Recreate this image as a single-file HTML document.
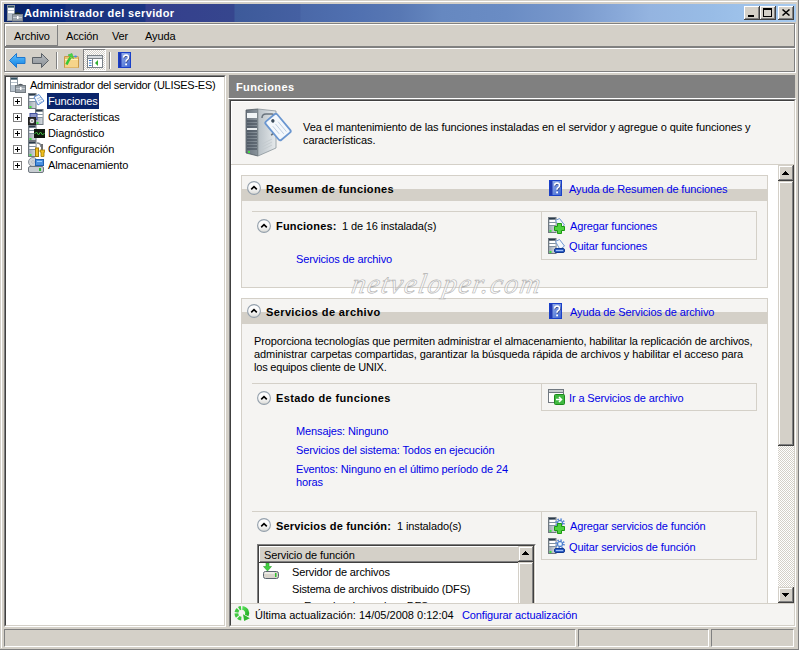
<!DOCTYPE html>
<html><head><meta charset="utf-8">
<style>
*{margin:0;padding:0;box-sizing:border-box}
html,body{width:799px;height:650px;overflow:hidden}
body{position:relative;background:#d4d0c8;font-family:"Liberation Sans",sans-serif;font-size:11px;color:#000}
.a{position:absolute}
.t{position:absolute;white-space:nowrap;line-height:13px;letter-spacing:-0.12px}
.b{font-weight:bold;letter-spacing:0.38px}
.lk{color:#0000e6}
.box{position:absolute;background:#f5f4f2;border:1px solid #d4d0c8}
.band{position:absolute;background:#d4d0c8}
.sep{position:absolute;height:1px;background:#d4d0c8}
.circ{position:absolute;width:14px;height:14px}
svg{position:absolute;display:block}
</style></head><body>
<!-- window frame -->
<div class="a" style="left:1px;top:1px;width:796px;height:1px;background:#fff"></div>
<div class="a" style="left:1px;top:1px;width:1px;height:647px;background:#fff"></div>
<div class="a" style="left:798px;top:0;width:1px;height:650px;background:#808080"></div>
<div class="a" style="left:0;top:649px;width:799px;height:1px;background:#808080"></div>

<!-- title bar -->
<div class="a" style="left:4px;top:4px;width:792px;height:18px;background:linear-gradient(to right,#0a246a 0px,#0a246a 26px,#0b2a7c 27px,#0b2a7c 61px,#18327e 62px,#1c3582 141px,#343e8c 142px,#36468e 230px,#3d5a9a 231px,#4560a2 296px,#4a68a8 297px,#5070b0 351px,#5878b4 396px,#6688c0 438px,#6a8cc4 501px,#7898cc 566px,#88a8d8 613px,#94b4e0 646px,#98bce6 706px,#a6caf0 792px)"></div>
<div class="t b" style="left:24px;top:7px;color:#fff">Administrador del servidor</div>


<!-- menu band -->
<div class="a" style="left:4px;top:23px;width:791px;height:1px;background:#808080"></div>
<div class="a" style="left:5px;top:24px;width:791px;height:1px;background:#fff"></div>
<div class="a" style="left:4px;top:23px;width:1px;height:49px;background:#808080"></div>
<div class="a" style="left:5px;top:24px;width:1px;height:49px;background:#fff"></div>
<div class="a" style="left:794px;top:23px;width:1px;height:49px;background:#808080"></div>
<div class="a" style="left:795px;top:24px;width:1px;height:49px;background:#fff"></div>
<div class="a" style="left:5px;top:46px;width:790px;height:2px;background:#808080"></div>
<div class="a" style="left:5px;top:48px;width:790px;height:1px;background:#fff"></div>
<div class="a" style="left:5px;top:71px;width:790px;height:1px;background:#808080"></div>
<div class="a" style="left:5px;top:72px;width:791px;height:1px;background:#fff"></div>
<!-- Archivo pressed -->
<div class="a" style="left:6px;top:25px;width:51px;height:1px;background:#fff"></div>
<div class="a" style="left:6px;top:45px;width:52px;height:1px;background:#808080"></div>
<div class="a" style="left:57px;top:25px;width:1px;height:21px;background:#808080"></div>
<div class="t" style="left:14px;top:30px">Archivo</div>
<div class="t" style="left:66px;top:30px">Acción</div>
<div class="t" style="left:112px;top:30px">Ver</div>
<div class="t" style="left:145px;top:30px">Ayuda</div>

<!-- tree pane -->
<div class="a" style="left:4px;top:75px;width:222px;height:552px;background:#fff;border-top:1px solid #808080;border-left:1px solid #808080;border-right:1px solid #fff;border-bottom:1px solid #fff"></div>
<div class="a" style="left:5px;top:76px;width:220px;height:550px;border-top:1px solid #404040;border-left:1px solid #404040;border-right:1px solid #d4d0c8;border-bottom:1px solid #d4d0c8"></div>
<div class="t" style="left:30px;top:79px;letter-spacing:-0.27px">Administrador del servidor (ULISES-ES)</div>
<div class="a" style="left:47px;top:93px;width:52px;height:16px;background:#0a246a"></div>
<div class="t" style="left:48px;top:95px;color:#fff">Funciones</div>
<div class="t" style="left:48px;top:111px">Características</div>
<div class="t" style="left:48px;top:127px">Diagnóstico</div>
<div class="t" style="left:48px;top:143px">Configuración</div>
<div class="t" style="left:48px;top:159px">Almacenamiento</div>

<!-- right pane header -->
<div class="a" style="left:229px;top:75px;width:566px;height:23px;background:#808080"></div>
<div class="a" style="left:228px;top:98px;width:568px;height:1px;background:#fff"></div>
<div class="t b" style="left:236px;top:81px;color:#fff">Funciones</div>

<!-- content pane -->
<div class="a" style="left:229px;top:99px;width:567px;height:528px;background:#fff;border-top:1px solid #808080;border-left:1px solid #808080;border-right:1px solid #fff;border-bottom:1px solid #fff"></div>
<div class="a" style="left:230px;top:100px;width:565px;height:526px;border-top:1px solid #404040;border-left:1px solid #404040;border-right:1px solid #d4d0c8;border-bottom:1px solid #d4d0c8"></div>
<!-- intro -->
<div class="a" style="left:231px;top:101px;width:563px;height:63px;background:#f5f4f2;border-top:1px solid #fff;border-left:1px solid #fff"></div>
<div class="a" style="left:231px;top:164px;width:563px;height:1px;background:#d4d0c8"></div>
<div class="t" style="left:303px;top:121px;letter-spacing:-0.1px">Vea el mantenimiento de las funciones instaladas en el servidor y agregue o quite funciones y<br>características.</div>

<!-- scroll content -->
<div class="a" style="left:231px;top:165px;width:547px;height:438px;overflow:hidden;background:#fff">
<div class="a" style="left:-231px;top:-165px;width:799px;height:650px">
<!-- box1 -->
<div class="box" style="left:241px;top:175px;width:527px;height:113px"></div>
<div class="band" style="left:242px;top:189px;width:525px;height:12px"></div>
<div class="t b" style="left:266px;top:183px">Resumen de funciones</div>
<div class="t lk" style="left:569px;top:183px">Ayuda de Resumen de funciones</div>
<div class="sep" style="left:252px;top:211px;width:289px"></div>
<div class="box" style="left:541px;top:211px;width:216px;height:49px"></div>
<div class="t b" style="left:276px;top:220px;letter-spacing:0.2px">Funciones:</div>
<div class="t" style="left:342px;top:220px">1 de 16 instalada(s)</div>
<div class="t lk" style="left:570px;top:220px">Agregar funciones</div>
<div class="t lk" style="left:569px;top:240px">Quitar funciones</div>
<div class="t lk" style="left:296px;top:253px">Servicios de archivo</div>
<!-- box2 -->
<div class="box" style="left:241px;top:298px;width:527px;height:400px"></div>
<div class="band" style="left:242px;top:312px;width:525px;height:12px"></div>
<div class="t b" style="left:266px;top:306px">Servicios de archivo</div>
<div class="t lk" style="left:570px;top:306px">Ayuda de Servicios de archivo</div>
<div class="t" style="left:254px;top:335px;letter-spacing:-0.14px">Proporciona tecnologías que permiten administrar el almacenamiento, habilitar la replicación de archivos,</div>
<div class="t" style="left:254px;top:348px;letter-spacing:-0.09px">administrar carpetas compartidas, garantizar la búsqueda rápida de archivos y habilitar el acceso para</div>
<div class="t" style="left:254px;top:361px;letter-spacing:-0.2px">los equipos cliente de UNIX.</div>
<div class="sep" style="left:252px;top:383px;width:289px"></div>
<div class="box" style="left:541px;top:383px;width:216px;height:28px"></div>
<div class="t b" style="left:276px;top:392px">Estado de funciones</div>
<div class="t lk" style="left:569px;top:392px">Ir a Servicios de archivo</div>
<div class="t lk" style="left:296px;top:425px">Mensajes: Ninguno</div>
<div class="t lk" style="left:296px;top:444px">Servicios del sistema: Todos en ejecución</div>
<div class="t lk" style="left:296px;top:463px">Eventos: Ninguno en el último período de 24<br>horas</div>
<div class="sep" style="left:252px;top:511px;width:289px"></div>
<div class="box" style="left:541px;top:511px;width:216px;height:49px"></div>
<div class="t b" style="left:276px;top:520px;letter-spacing:0.18px">Servicios de función:</div>
<div class="t" style="left:397px;top:520px">1 instalado(s)</div>
<div class="t lk" style="left:570px;top:520px">Agregar servicios de función</div>
<div class="t lk" style="left:569px;top:541px">Quitar servicios de función</div>
<svg style="left:247px;top:181px" width="14" height="14" viewBox="0 0 14 14">
<defs><linearGradient id="cg247181" x1="0" y1="0" x2="0" y2="1"><stop offset="0" stop-color="#ffffff"/><stop offset="0.55" stop-color="#f8f8f8"/><stop offset="1" stop-color="#d8d8d4"/></linearGradient></defs>
<circle cx="7" cy="7" r="6.4" fill="url(#cg247181)" stroke="#94a0ac" stroke-width="1.1"/>
<path d="M4.2 8.4 L7 5.6 L9.8 8.4" fill="none" stroke="#000" stroke-width="1.6"/></svg>
<svg style="left:247px;top:304px" width="14" height="14" viewBox="0 0 14 14">
<defs><linearGradient id="cg247304" x1="0" y1="0" x2="0" y2="1"><stop offset="0" stop-color="#ffffff"/><stop offset="0.55" stop-color="#f8f8f8"/><stop offset="1" stop-color="#d8d8d4"/></linearGradient></defs>
<circle cx="7" cy="7" r="6.4" fill="url(#cg247304)" stroke="#94a0ac" stroke-width="1.1"/>
<path d="M4.2 8.4 L7 5.6 L9.8 8.4" fill="none" stroke="#000" stroke-width="1.6"/></svg>
<svg style="left:257px;top:219px" width="14" height="14" viewBox="0 0 14 14">
<defs><linearGradient id="cg257219" x1="0" y1="0" x2="0" y2="1"><stop offset="0" stop-color="#ffffff"/><stop offset="0.55" stop-color="#f8f8f8"/><stop offset="1" stop-color="#d8d8d4"/></linearGradient></defs>
<circle cx="7" cy="7" r="6.4" fill="url(#cg257219)" stroke="#94a0ac" stroke-width="1.1"/>
<path d="M4.2 8.4 L7 5.6 L9.8 8.4" fill="none" stroke="#000" stroke-width="1.6"/></svg>
<svg style="left:257px;top:391px" width="14" height="14" viewBox="0 0 14 14">
<defs><linearGradient id="cg257391" x1="0" y1="0" x2="0" y2="1"><stop offset="0" stop-color="#ffffff"/><stop offset="0.55" stop-color="#f8f8f8"/><stop offset="1" stop-color="#d8d8d4"/></linearGradient></defs>
<circle cx="7" cy="7" r="6.4" fill="url(#cg257391)" stroke="#94a0ac" stroke-width="1.1"/>
<path d="M4.2 8.4 L7 5.6 L9.8 8.4" fill="none" stroke="#000" stroke-width="1.6"/></svg>
<svg style="left:257px;top:518px" width="14" height="14" viewBox="0 0 14 14">
<defs><linearGradient id="cg257518" x1="0" y1="0" x2="0" y2="1"><stop offset="0" stop-color="#ffffff"/><stop offset="0.55" stop-color="#f8f8f8"/><stop offset="1" stop-color="#d8d8d4"/></linearGradient></defs>
<circle cx="7" cy="7" r="6.4" fill="url(#cg257518)" stroke="#94a0ac" stroke-width="1.1"/>
<path d="M4.2 8.4 L7 5.6 L9.8 8.4" fill="none" stroke="#000" stroke-width="1.6"/></svg>
<svg style="left:549px;top:180px" width="13" height="16" viewBox="0 0 13 16">
<defs><linearGradient id="hg549180" x1="0" y1="0" x2="1" y2="1"><stop offset="0" stop-color="#a0b8ec"/><stop offset="0.5" stop-color="#7090e0"/><stop offset="1" stop-color="#3860d0"/></linearGradient></defs>
<rect x="0.5" y="0.5" width="12" height="15" fill="url(#hg549180)" stroke="#1a40c8"/>
<rect x="1" y="1" width="2.5" height="14" fill="#2038b0"/>
<path d="M5.6 5.6 q0.2-2.6 2.6-2.6 q2.3 0.1 2.3 2.4 q0 1.4-1.6 2.4 q-0.9 0.6-0.9 2" fill="none" stroke="#2a3060" stroke-width="1.2" transform="translate(0.6 0.6)"/>
<path d="M5.6 5.6 q0.2-2.6 2.6-2.6 q2.3 0.1 2.3 2.4 q0 1.4-1.6 2.4 q-0.9 0.6-0.9 2" fill="none" stroke="#fff" stroke-width="1.5"/>
<rect x="7.2" y="11.5" width="1.8" height="1.8" fill="#fff"/></svg>
<svg style="left:549px;top:303px" width="13" height="16" viewBox="0 0 13 16">
<defs><linearGradient id="hg549303" x1="0" y1="0" x2="1" y2="1"><stop offset="0" stop-color="#a0b8ec"/><stop offset="0.5" stop-color="#7090e0"/><stop offset="1" stop-color="#3860d0"/></linearGradient></defs>
<rect x="0.5" y="0.5" width="12" height="15" fill="url(#hg549303)" stroke="#1a40c8"/>
<rect x="1" y="1" width="2.5" height="14" fill="#2038b0"/>
<path d="M5.6 5.6 q0.2-2.6 2.6-2.6 q2.3 0.1 2.3 2.4 q0 1.4-1.6 2.4 q-0.9 0.6-0.9 2" fill="none" stroke="#2a3060" stroke-width="1.2" transform="translate(0.6 0.6)"/>
<path d="M5.6 5.6 q0.2-2.6 2.6-2.6 q2.3 0.1 2.3 2.4 q0 1.4-1.6 2.4 q-0.9 0.6-0.9 2" fill="none" stroke="#fff" stroke-width="1.5"/>
<rect x="7.2" y="11.5" width="1.8" height="1.8" fill="#fff"/></svg>
<svg style="left:548px;top:217px" width="9" height="16" viewBox="0 0 9 16">
<defs><linearGradient id="sv548217" x1="0" x2="1"><stop offset="0" stop-color="#9aa4ae"/><stop offset="1" stop-color="#d8dde2"/></linearGradient></defs>
<rect x="0.5" y="0.5" width="7.5" height="15" fill="url(#sv548217)" stroke="#707880"/>
<rect x="1" y="1" width="6.5" height="1.5" fill="#2a3a4a"/>
<rect x="1.5" y="3" width="6" height="2" fill="#fff"/>
<rect x="1.5" y="6" width="6" height="2" fill="#fff"/>
<rect x="1" y="5" width="6.5" height="1" fill="#8090a0"/>
<rect x="1" y="8" width="6.5" height="1" fill="#8090a0"/>
<rect x="1.5" y="13" width="2" height="2" fill="#40e040"/>
</svg>
<svg style="left:555px;top:218px" width="10" height="12" viewBox="0 0 10 12">
<path d="M0.5 2.5 L4.5 0.5 L9.5 7 L5 10.5 Z" fill="#f4f8fc" stroke="#7098d0"/></svg>
<svg style="left:554px;top:223px" width="11" height="11" viewBox="0 0 11 11">
<path d="M3.5 0.5h4v3h3v4h-3v3h-4v-3h-3v-4h3z" fill="#50d040" stroke="#1a9a10"/></svg>
<svg style="left:548px;top:238px" width="9" height="16" viewBox="0 0 9 16">
<defs><linearGradient id="sv548238" x1="0" x2="1"><stop offset="0" stop-color="#9aa4ae"/><stop offset="1" stop-color="#d8dde2"/></linearGradient></defs>
<rect x="0.5" y="0.5" width="7.5" height="15" fill="url(#sv548238)" stroke="#707880"/>
<rect x="1" y="1" width="6.5" height="1.5" fill="#2a3a4a"/>
<rect x="1.5" y="3" width="6" height="2" fill="#fff"/>
<rect x="1.5" y="6" width="6" height="2" fill="#fff"/>
<rect x="1" y="5" width="6.5" height="1" fill="#8090a0"/>
<rect x="1" y="8" width="6.5" height="1" fill="#8090a0"/>
<rect x="1.5" y="13" width="2" height="2" fill="#40e040"/>
</svg>
<svg style="left:555px;top:239px" width="10" height="12" viewBox="0 0 10 12">
<path d="M0.5 2.5 L4.5 0.5 L9.5 7 L5 10.5 Z" fill="#f4f8fc" stroke="#7098d0"/></svg>
<svg style="left:554px;top:248px" width="11" height="5" viewBox="0 0 11 5">
<rect x="0.5" y="0.5" width="10" height="4" rx="1.5" fill="#3060c8" stroke="#103890"/><rect x="2" y="2" width="7" height="1" fill="#a0c0f0"/></svg>
<svg style="left:548px;top:517px" width="9" height="16" viewBox="0 0 9 16">
<defs><linearGradient id="sv548517" x1="0" x2="1"><stop offset="0" stop-color="#9aa4ae"/><stop offset="1" stop-color="#d8dde2"/></linearGradient></defs>
<rect x="0.5" y="0.5" width="7.5" height="15" fill="url(#sv548517)" stroke="#707880"/>
<rect x="1" y="1" width="6.5" height="1.5" fill="#2a3a4a"/>
<rect x="1.5" y="3" width="6" height="2" fill="#fff"/>
<rect x="1.5" y="6" width="6" height="2" fill="#fff"/>
<rect x="1" y="5" width="6.5" height="1" fill="#8090a0"/>
<rect x="1" y="8" width="6.5" height="1" fill="#8090a0"/>
<rect x="1.5" y="13" width="2" height="2" fill="#40e040"/>
</svg>
<svg style="left:555px;top:518px" width="10" height="10" viewBox="0 0 10 10">
<circle cx="5" cy="5" r="3.9" fill="none" stroke="#5a8ad8" stroke-width="1.8" stroke-dasharray="1.5 1.55"/><circle cx="5" cy="5" r="2.7" fill="#b8d4f4" stroke="#4a7ac8" stroke-width="1"/><circle cx="5" cy="5" r="1.1" fill="#fff"/></svg>
<svg style="left:554px;top:523px" width="11" height="11" viewBox="0 0 11 11">
<path d="M3.5 0.5h4v3h3v4h-3v3h-4v-3h-3v-4h3z" fill="#50d040" stroke="#1a9a10"/></svg>
<svg style="left:548px;top:538px" width="9" height="16" viewBox="0 0 9 16">
<defs><linearGradient id="sv548538" x1="0" x2="1"><stop offset="0" stop-color="#9aa4ae"/><stop offset="1" stop-color="#d8dde2"/></linearGradient></defs>
<rect x="0.5" y="0.5" width="7.5" height="15" fill="url(#sv548538)" stroke="#707880"/>
<rect x="1" y="1" width="6.5" height="1.5" fill="#2a3a4a"/>
<rect x="1.5" y="3" width="6" height="2" fill="#fff"/>
<rect x="1.5" y="6" width="6" height="2" fill="#fff"/>
<rect x="1" y="5" width="6.5" height="1" fill="#8090a0"/>
<rect x="1" y="8" width="6.5" height="1" fill="#8090a0"/>
<rect x="1.5" y="13" width="2" height="2" fill="#40e040"/>
</svg>
<svg style="left:555px;top:539px" width="10" height="10" viewBox="0 0 10 10">
<circle cx="5" cy="5" r="3.9" fill="none" stroke="#5a8ad8" stroke-width="1.8" stroke-dasharray="1.5 1.55"/><circle cx="5" cy="5" r="2.7" fill="#b8d4f4" stroke="#4a7ac8" stroke-width="1"/><circle cx="5" cy="5" r="1.1" fill="#fff"/></svg>
<svg style="left:554px;top:548px" width="11" height="5" viewBox="0 0 11 5">
<rect x="0.5" y="0.5" width="10" height="4" rx="1.5" fill="#3060c8" stroke="#103890"/><rect x="2" y="2" width="7" height="1" fill="#a0c0f0"/></svg>
<svg style="left:548px;top:389px" width="17" height="16" viewBox="0 0 17 16">
<rect x="0.5" y="0.5" width="15" height="13" fill="#fff" stroke="#707880"/><rect x="1" y="1" width="14" height="2" fill="#c8ccd0"/><path d="M1 3.5h14" stroke="#707880"/>
<rect x="6.5" y="5.5" width="10" height="10" rx="1" fill="#40b840" stroke="#1a8a1a"/>
<path d="M8 10.5h5M11 8l2.5 2.5L11 13" fill="none" stroke="#fff" stroke-width="1.5"/></svg>

<!-- listview -->
<div class="a" style="left:257px;top:544px;width:279px;height:100px;background:#fff;border-top:1px solid #808080;border-left:1px solid #808080;border-right:1px solid #fff;border-bottom:1px solid #fff"></div>
<div class="a" style="left:258px;top:545px;width:277px;height:98px;border-top:1px solid #404040;border-left:1px solid #404040;border-right:1px solid #d4d0c8;border-bottom:1px solid #d4d0c8"></div>
<div class="a" style="left:259px;top:546px;width:260px;height:16px;background:#d4d0c8;border-top:1px solid #fff;border-left:1px solid #fff;box-shadow:inset 0 -1px #808080, 0 1px #404040"></div>
<div class="t" style="left:264px;top:549px">Servicio de función</div>
<svg style="left:263px;top:563px" width="16" height="16" viewBox="0 0 16 16">
<path d="M3 0h3v3.5h2.5L4.5 8 0.5 3.5H3z" fill="#40d040" stroke="#30a030" stroke-width="0.6"/>
<rect x="0.5" y="8.5" width="15" height="7" rx="2" fill="#d8d4cc" stroke="#5a6470"/><rect x="1.5" y="9.5" width="10" height="1" fill="#fff"/><rect x="12" y="10" width="1.5" height="4" fill="#30c030"/></svg>
<div class="t" style="left:292px;top:566px">Servidor de archivos</div>
<div class="t" style="left:292px;top:583px;letter-spacing:-0.17px">Sistema de archivos distribuido (DFS)</div>
<div class="t" style="left:304px;top:600px;letter-spacing:-0.3px">Espacios de nombres DFS</div>
<div class="a" style="left:518px;top:546px;width:16px;height:16px;background:#d4d0c8;box-shadow:inset -1px -1px #404040,inset 1px 1px #d4d0c8,inset -2px -2px #808080,inset 2px 2px #fff"></div>
<svg style="left:522px;top:551px" width="7" height="4" viewBox="0 0 7 4"><path d="M3 0h1v1h1v1h1v1h1v1h-7v-1h1v-1h1v-1h1z" fill="#000"/></svg>
<div class="a" style="left:518px;top:562px;width:16px;height:60px;background:#d4d0c8;box-shadow:inset -1px -1px #404040,inset 1px 1px #d4d0c8,inset -2px -2px #808080,inset 2px 2px #fff"></div>
</div>
</div>
<!-- footer -->
<div class="a" style="left:231px;top:603px;width:563px;height:1px;background:#d4d0c8"></div>
<div class="a" style="left:231px;top:604px;width:563px;height:21px;background:#f5f4f2"></div>
<div class="t" style="left:255px;top:609px;letter-spacing:0">Última actualización: 14/05/2008 0:12:04</div>
<div class="t lk" style="left:462px;top:609px">Configurar actualización</div>

<!-- status bar -->
<div class="a" style="left:4px;top:629px;width:572px;height:18px;border-top:1px solid #808080;border-left:1px solid #808080;border-right:1px solid #fff;border-bottom:1px solid #fff"></div>
<div class="a" style="left:578px;top:629px;width:131px;height:18px;border-top:1px solid #808080;border-left:1px solid #808080;border-right:1px solid #fff;border-bottom:1px solid #fff"></div>
<div class="a" style="left:711px;top:629px;width:83px;height:18px;border-top:1px solid #808080;border-left:1px solid #808080;border-right:1px solid #fff;border-bottom:1px solid #fff"></div>
<!-- icons1 -->
<svg style="left:7px;top:5px" width="16" height="17" viewBox="0 0 16 17">
<rect x="0.5" y="0.5" width="7" height="15" fill="#b8c2cc" stroke="#8a949e"/>
<rect x="1" y="1" width="6" height="1.5" fill="#305060"/>
<rect x="1" y="3" width="6" height="2" fill="#fff"/><rect x="1" y="6" width="6" height="2" fill="#fff"/>
<path d="M7.5 9.5 q3-3 6 0" fill="none" stroke="#1a2a20" stroke-width="1.2"/>
<rect x="5.5" y="9.5" width="10" height="6.5" fill="#9aa2aa" stroke="#7a828a"/>
<rect x="6" y="12" width="9" height="1" fill="#c8ced4"/><rect x="10" y="11" width="1.5" height="3" fill="#fff"/>
</svg>
<svg style="left:10px;top:77px" width="16" height="16" viewBox="0 0 16 16">
<rect x="0.5" y="0.5" width="7" height="14" fill="#b8c2cc" stroke="#8a949e"/>
<rect x="1" y="1" width="6" height="1.5" fill="#305060"/>
<rect x="1" y="3" width="6" height="2" fill="#fff"/><rect x="1" y="6" width="6" height="2" fill="#fff"/>
<path d="M7.5 9 q3-3 6 0" fill="none" stroke="#505860" stroke-width="1.2"/>
<rect x="5.5" y="8.5" width="10" height="7" fill="#9aa2aa" stroke="#70787e"/>
<rect x="6" y="11" width="9" height="1" fill="#c8ced4"/><rect x="10" y="10" width="1.5" height="3" fill="#fff"/>
</svg>
<svg style="left:13px;top:97px" width="9" height="9" viewBox="0 0 9 9">
<rect x="0.5" y="0.5" width="8" height="8" fill="#fff" stroke="#808080"/><path d="M2 4.5h5M4.5 2v5" stroke="#000" stroke-width="1"/></svg>
<svg style="left:13px;top:113px" width="9" height="9" viewBox="0 0 9 9">
<rect x="0.5" y="0.5" width="8" height="8" fill="#fff" stroke="#808080"/><path d="M2 4.5h5M4.5 2v5" stroke="#000" stroke-width="1"/></svg>
<svg style="left:13px;top:129px" width="9" height="9" viewBox="0 0 9 9">
<rect x="0.5" y="0.5" width="8" height="8" fill="#fff" stroke="#808080"/><path d="M2 4.5h5M4.5 2v5" stroke="#000" stroke-width="1"/></svg>
<svg style="left:13px;top:145px" width="9" height="9" viewBox="0 0 9 9">
<rect x="0.5" y="0.5" width="8" height="8" fill="#fff" stroke="#808080"/><path d="M2 4.5h5M4.5 2v5" stroke="#000" stroke-width="1"/></svg>
<svg style="left:13px;top:161px" width="9" height="9" viewBox="0 0 9 9">
<rect x="0.5" y="0.5" width="8" height="8" fill="#fff" stroke="#808080"/><path d="M2 4.5h5M4.5 2v5" stroke="#000" stroke-width="1"/></svg>
<svg style="left:28px;top:93px" width="9" height="16" viewBox="0 0 9 16">
<defs><linearGradient id="sg" x1="0" x2="1"><stop offset="0" stop-color="#9aa4ae"/><stop offset="1" stop-color="#d8dde2"/></linearGradient></defs>
<rect x="0.5" y="0.5" width="7.5" height="15" fill="url(#sg)" stroke="#707880"/>
<rect x="1" y="1" width="6.5" height="1.5" fill="#2a3a4a"/>
<rect x="1.5" y="3" width="6" height="2" fill="#fff"/>
<rect x="1.5" y="6" width="6" height="2" fill="#fff"/>
<rect x="1" y="5" width="6.5" height="1" fill="#8090a0"/>
<rect x="1" y="8" width="6.5" height="1" fill="#8090a0"/>
<rect x="1.5" y="13" width="2" height="2" fill="#40e040"/>
</svg>
<svg style="left:33px;top:94px" width="12" height="13" viewBox="0 0 12 13">
<path d="M1 3 L6 0.5 L11 7 L5 11 Z" fill="#f4f8fc" stroke="#5a8ad0"/>
<path d="M4 5l4-2M5 7l4-2M6 9l3-1.5" stroke="#90b0d8" stroke-width="0.8"/></svg>
<svg style="left:35px;top:109px" width="9" height="16" viewBox="0 0 9 16">
<defs><linearGradient id="sg" x1="0" x2="1"><stop offset="0" stop-color="#9aa4ae"/><stop offset="1" stop-color="#d8dde2"/></linearGradient></defs>
<rect x="0.5" y="0.5" width="7.5" height="15" fill="url(#sg)" stroke="#707880"/>
<rect x="1" y="1" width="6.5" height="1.5" fill="#2a3a4a"/>
<rect x="1.5" y="3" width="6" height="2" fill="#fff"/>
<rect x="1.5" y="6" width="6" height="2" fill="#fff"/>
<rect x="1" y="5" width="6.5" height="1" fill="#8090a0"/>
<rect x="1" y="8" width="6.5" height="1" fill="#8090a0"/>
<rect x="1.5" y="13" width="2" height="2" fill="#40e040"/>
</svg>
<svg style="left:28px;top:113px" width="10" height="12" viewBox="0 0 10 12">
<rect x="2" y="0.5" width="7" height="6" fill="#8a94c8" stroke="#4050a0"/>
<rect x="0.5" y="4.5" width="7" height="7" fill="#303030" stroke="#202020"/><circle cx="4" cy="8" r="2.3" fill="#e8e8e8"/><circle cx="4" cy="8" r="0.7" fill="#303030"/></svg>
<svg style="left:28px;top:125px" width="9" height="16" viewBox="0 0 9 16">
<defs><linearGradient id="sg" x1="0" x2="1"><stop offset="0" stop-color="#9aa4ae"/><stop offset="1" stop-color="#d8dde2"/></linearGradient></defs>
<rect x="0.5" y="0.5" width="7.5" height="15" fill="url(#sg)" stroke="#707880"/>
<rect x="1" y="1" width="6.5" height="1.5" fill="#2a3a4a"/>
<rect x="1.5" y="3" width="6" height="2" fill="#fff"/>
<rect x="1.5" y="6" width="6" height="2" fill="#fff"/>
<rect x="1" y="5" width="6.5" height="1" fill="#8090a0"/>
<rect x="1" y="8" width="6.5" height="1" fill="#8090a0"/>
<rect x="1.5" y="13" width="2" height="2" fill="#40e040"/>
</svg>
<svg style="left:34px;top:129px" width="11" height="9" viewBox="0 0 11 9">
<rect x="0" y="0" width="11" height="9" fill="#101810"/><path d="M0.5 5 l2-2 l2 3 l2-3 l2 3 l2-2" fill="none" stroke="#40c040" stroke-width="1"/></svg>
<svg style="left:28px;top:141px" width="9" height="16" viewBox="0 0 9 16">
<defs><linearGradient id="sg" x1="0" x2="1"><stop offset="0" stop-color="#9aa4ae"/><stop offset="1" stop-color="#d8dde2"/></linearGradient></defs>
<rect x="0.5" y="0.5" width="7.5" height="15" fill="url(#sg)" stroke="#707880"/>
<rect x="1" y="1" width="6.5" height="1.5" fill="#2a3a4a"/>
<rect x="1.5" y="3" width="6" height="2" fill="#fff"/>
<rect x="1.5" y="6" width="6" height="2" fill="#fff"/>
<rect x="1" y="5" width="6.5" height="1" fill="#8090a0"/>
<rect x="1" y="8" width="6.5" height="1" fill="#8090a0"/>
<rect x="1.5" y="13" width="2" height="2" fill="#40e040"/>
</svg>
<svg style="left:35px;top:142px" width="10" height="15" viewBox="0 0 10 15">
<path d="M2 1 q4 0 4 4" fill="none" stroke="#808890" stroke-width="1.5"/>
<rect x="0.5" y="6" width="3" height="8.5" fill="#f0c020" stroke="#a07808"/><rect x="6" y="2" width="2" height="6" fill="#707070"/>
<path d="M5 8h5v2h-1v4.5h-3v-4.5h-1z" fill="#f0c020" stroke="#a07808" stroke-width="0.8"/></svg>
<svg style="left:28px;top:157px" width="16" height="16" viewBox="0 0 16 16">
<circle cx="5" cy="5" r="4.5" fill="#d0d4d8" stroke="#8a9098"/><circle cx="5" cy="5" r="1.2" fill="#fff" stroke="#8a9098" stroke-width="0.6"/>
<rect x="7.5" y="2.5" width="8" height="6" fill="#4a90e0" stroke="#2060b0"/><rect x="9" y="4" width="5" height="1" fill="#a0d0ff"/>
<rect x="0.5" y="9.5" width="15" height="6" rx="1.5" fill="#c8cdd2" stroke="#707880"/><rect x="11" y="11" width="2" height="3" fill="#30c030"/></svg>
<svg style="left:9px;top:53px" width="17" height="15" viewBox="0 0 17 15">
<defs><linearGradient id="bk" x1="0" y1="0" x2="0" y2="1"><stop offset="0" stop-color="#60c0ff"/><stop offset="1" stop-color="#1080e0"/></linearGradient></defs>
<path d="M0.5 7.5 L7.5 0.5 V4.5 H16 V10.5 H7.5 V14.5 Z" fill="url(#bk)" stroke="#1e78d0"/></svg>
<svg style="left:32px;top:53px" width="17" height="15" viewBox="0 0 17 15">
<defs><linearGradient id="fw" x1="0" y1="0" x2="0" y2="1"><stop offset="0" stop-color="#b8bcc0"/><stop offset="1" stop-color="#8a9096"/></linearGradient></defs>
<path d="M16.5 7.5 L9.5 0.5 V4.5 H0.5 V10.5 H9.5 V14.5 Z" fill="url(#fw)" stroke="#5a6066"/></svg>
<div class="a" style="left:56px;top:52px;width:1px;height:17px;background:#808080"></div><div class="a" style="left:57px;top:52px;width:1px;height:17px;background:#fff"></div>
<div class="a" style="left:109px;top:52px;width:1px;height:17px;background:#808080"></div><div class="a" style="left:110px;top:52px;width:1px;height:17px;background:#fff"></div>
<svg style="left:63px;top:53px" width="17" height="16" viewBox="0 0 17 16">
<path d="M1.5 3.5 h13 a1 1 0 0 1 1 1 v10 h-14 z" fill="#ecc272" stroke="#c89848"/>
<rect x="2" y="6" width="13" height="8.5" fill="#f6d48a"/>
<rect x="2" y="6" width="13" height="1" fill="#fff0b8"/>
<ellipse cx="12.5" cy="3.5" rx="1.4" ry="0.9" fill="#3a8ee8"/>
<path d="M3.5 11.5 C4.5 9 6 6.5 7.5 4.5" fill="none" stroke="#38c838" stroke-width="2.6"/>
<path d="M5 2 L9 0.5 L10.5 5.5 Z" fill="#48d848" stroke="#38b838" stroke-width="0.6"/>
</svg>
<div class="a" style="left:83px;top:49px;width:23px;height:22px;border-top:1px solid #808080;border-left:1px solid #808080;border-right:1px solid #fff;border-bottom:1px solid #fff;background-color:#fff;background-image:linear-gradient(45deg,#d4d0c8 25%,transparent 25%,transparent 75%,#d4d0c8 75%),linear-gradient(45deg,#d4d0c8 25%,transparent 25%,transparent 75%,#d4d0c8 75%);background-size:2px 2px;background-position:0 0,1px 1px"></div>
<svg style="left:87px;top:55px" width="16" height="13" viewBox="0 0 16 13">
<rect x="0.5" y="0.5" width="15" height="12" fill="#fff" stroke="#7a8288"/><rect x="1" y="1" width="14" height="2" fill="#d8dce0"/>
<path d="M1 3.5h14" stroke="#7a8288"/><path d="M5.5 3.5v9" stroke="#7a8288"/>
<rect x="2" y="5" width="2.5" height="1" fill="#3a80d0"/><rect x="2" y="7.5" width="2.5" height="1" fill="#3a80d0"/><rect x="2" y="10" width="2.5" height="1" fill="#3a80d0"/>
<path d="M11 5 L8 8 L11 11 Z" fill="#30b030"/></svg>
<svg style="left:118px;top:52px" width="13" height="16" viewBox="0 0 13 16">
<defs><linearGradient id="hg11852" x1="0" y1="0" x2="1" y2="1"><stop offset="0" stop-color="#a0b8ec"/><stop offset="0.5" stop-color="#7090e0"/><stop offset="1" stop-color="#3860d0"/></linearGradient></defs>
<rect x="0.5" y="0.5" width="12" height="15" fill="url(#hg11852)" stroke="#1a40c8"/>
<rect x="1" y="1" width="2.5" height="14" fill="#2038b0"/>
<path d="M5.6 5.6 q0.2-2.6 2.6-2.6 q2.3 0.1 2.3 2.4 q0 1.4-1.6 2.4 q-0.9 0.6-0.9 2" fill="none" stroke="#2a3060" stroke-width="1.2" transform="translate(0.6 0.6)"/>
<path d="M5.6 5.6 q0.2-2.6 2.6-2.6 q2.3 0.1 2.3 2.4 q0 1.4-1.6 2.4 q-0.9 0.6-0.9 2" fill="none" stroke="#fff" stroke-width="1.5"/>
<rect x="7.2" y="11.5" width="1.8" height="1.8" fill="#fff"/></svg>

<!-- main scrollbar -->
<div class="a" style="left:778px;top:165px;width:16px;height:438px;background-color:#fff;background-image:linear-gradient(45deg,#d4d0c8 25%,transparent 25%,transparent 75%,#d4d0c8 75%),linear-gradient(45deg,#d4d0c8 25%,transparent 25%,transparent 75%,#d4d0c8 75%);background-size:2px 2px;background-position:0 0,1px 1px"></div>
<div class="a" style="left:778px;top:165px;width:16px;height:16px;background:#d4d0c8;box-shadow:inset -1px -1px #404040,inset 1px 1px #d4d0c8,inset -2px -2px #808080,inset 2px 2px #fff"></div>
<svg style="left:782px;top:171px" width="7" height="4" viewBox="0 0 7 4"><path d="M3 0h1v1h1v1h1v1h1v1h-7v-1h1v-1h1v-1h1z" fill="#000"/></svg>
<div class="a" style="left:778px;top:181px;width:16px;height:265px;background:#d4d0c8;box-shadow:inset -1px -1px #404040,inset 1px 1px #d4d0c8,inset -2px -2px #808080,inset 2px 2px #fff"></div>
<div class="a" style="left:778px;top:587px;width:16px;height:16px;background:#d4d0c8;box-shadow:inset -1px -1px #404040,inset 1px 1px #d4d0c8,inset -2px -2px #808080,inset 2px 2px #fff"></div>
<svg style="left:782px;top:593px" width="7" height="4" viewBox="0 0 7 4"><path d="M0 0h7v1h-1v1h-1v1h-1v1h-1v-1h-1v-1h-1v-1h-1z" fill="#000"/></svg>
<!-- big intro icon -->
<svg style="left:243px;top:108px" width="50" height="50" viewBox="0 0 50 50">
<defs>
<linearGradient id="bf" x1="0" x2="1"><stop offset="0" stop-color="#6a747e"/><stop offset="1" stop-color="#8a949c"/></linearGradient>
<linearGradient id="bs" x1="0" x2="1"><stop offset="0" stop-color="#b8c0c6"/><stop offset="1" stop-color="#e6eaec"/></linearGradient>
</defs>
<path d="M3 2 L15 1 L15 48 L3 45 Z" fill="url(#bf)" stroke="#505a62" stroke-width="0.8"/>
<path d="M15 1 L33 3 L33 40 L15 48 Z" fill="url(#bs)" stroke="#8a949a" stroke-width="0.8"/>
<rect x="4" y="5" width="10" height="5" fill="#f0f4f6"/>
<path d="M4 13h10M4 16h10M4 19h10M4 23h10M4 26h10M4 29h10M4 32h10M4 35h10M4 38h10M4 41h10" stroke="#3a4450" stroke-width="1.2"/>
<rect x="4" y="20" width="10" height="2" fill="#e8ecee"/>
<rect x="5" y="43" width="2" height="2" fill="#40e040"/>
<path d="M19 10 q0-4 4-4 h6 q2 0 2 3 v14 q0 3-3 4" fill="none" stroke="#6a747e" stroke-width="1.5"/>
<path d="M19 36l10-5M19 39l10-5M19 42l10-5" stroke="#c0c8cc" stroke-width="0.8"/>
<g transform="translate(35 19) rotate(50)">
<rect x="-12" y="-7.5" width="24" height="15" rx="2" fill="#f4f8fc" stroke="#6a96d0" stroke-width="1.8"/>
<circle cx="-8" cy="0" r="1.7" fill="#3a4a5a"/>
<path d="M-4 -3.5h13M-4 0h13M-4 3.5h10" stroke="#b8c8dc" stroke-width="0.8"/>
</g>
</svg>
<!-- watermark -->
<div class="a" style="left:352px;top:268px;transform:skewX(-10deg);font-family:'Liberation Serif',serif;font-style:italic;font-size:28px;line-height:32px;letter-spacing:1.5px;color:rgba(255,255,255,0.5);-webkit-text-stroke:0.6px #b0b0b0;white-space:nowrap">netveloper.com</div>
<!-- refresh icon -->
<svg style="left:234px;top:605px" width="17" height="17" viewBox="0 0 17 17">
<defs><linearGradient id="rg" x1="0" y1="0" x2="1" y2="1"><stop offset="0" stop-color="#58e058"/><stop offset="1" stop-color="#28b028"/></linearGradient></defs>
<path d="M8.36 2.88 A5.4 5.4 0 0 1 12.69 10.53" fill="none" stroke="url(#rg)" stroke-width="4"/>
<path d="M9 9.2 L15.8 13.3 L10.2 16 Z" fill="#30b830"/>
<path d="M7.33 13.63 A5.4 5.4 0 0 1 7.05 2.90" fill="none" stroke="#40c840" stroke-width="3.8" stroke-dasharray="3.3 1.1"/>
</svg>
<!-- caption buttons -->
<div class="a" style="left:744px;top:6px;width:16px;height:14px;background:#d4d0c8;box-shadow:inset -1px -1px #404040,inset 1px 1px #fff,inset -2px -2px #808080"></div>
<div class="a" style="left:748px;top:15px;width:6px;height:2px;background:#000"></div>
<div class="a" style="left:760px;top:6px;width:16px;height:14px;background:#d4d0c8;box-shadow:inset -1px -1px #404040,inset 1px 1px #fff,inset -2px -2px #808080"></div>
<div class="a" style="left:763px;top:8px;width:9px;height:9px;border:1px solid #000;border-top-width:2px"></div>
<div class="a" style="left:778px;top:6px;width:16px;height:14px;background:#d4d0c8;box-shadow:inset -1px -1px #404040,inset 1px 1px #fff,inset -2px -2px #808080"></div>
<svg style="left:782px;top:9px" width="8" height="7" viewBox="0 0 8 7"><path d="M0.5 0.5L7.5 6.5M7.5 0.5L0.5 6.5" stroke="#000" stroke-width="1.5"/></svg>
</body></html>
